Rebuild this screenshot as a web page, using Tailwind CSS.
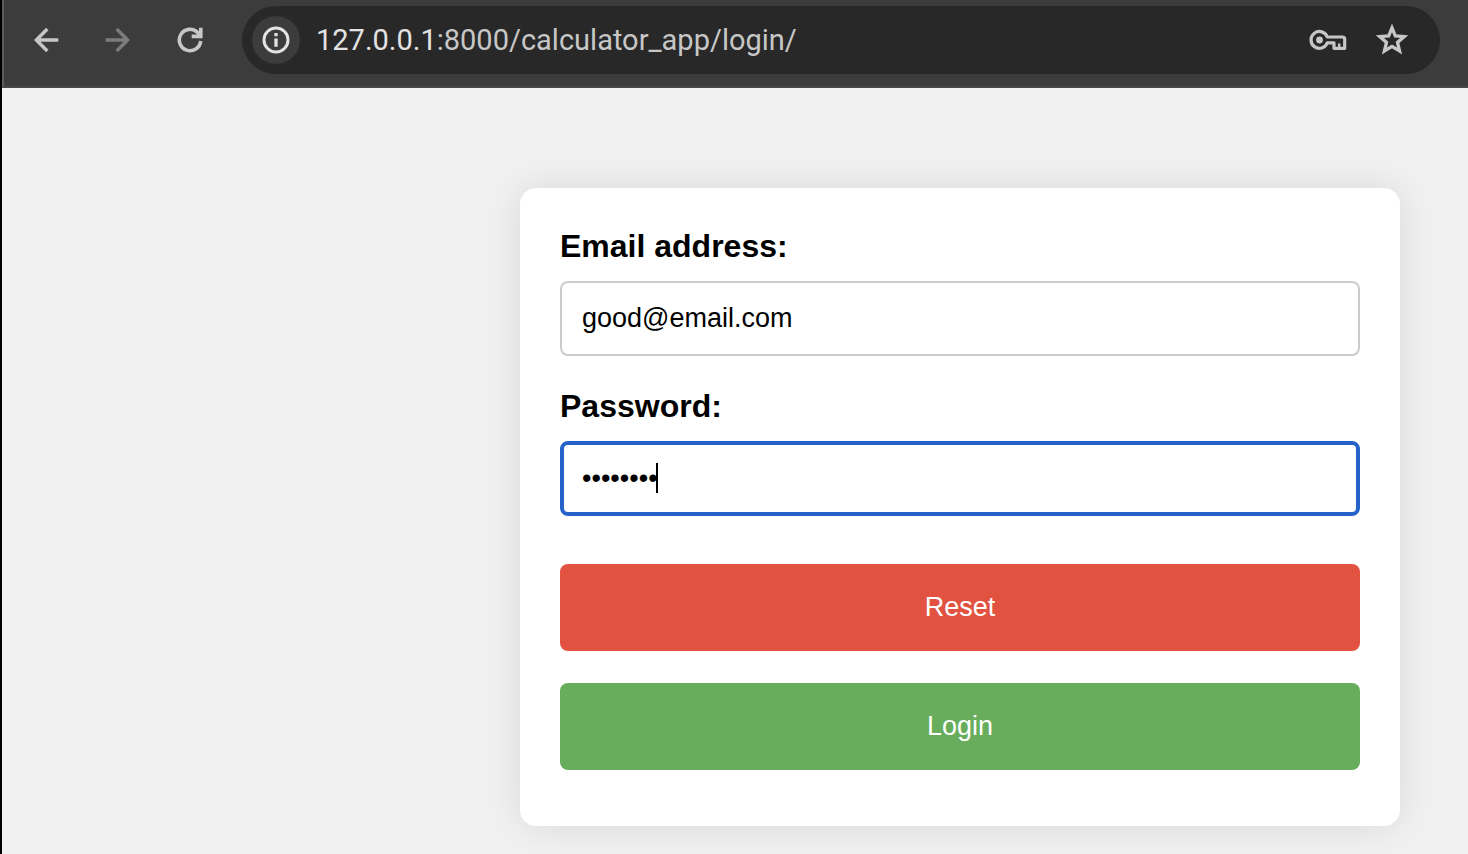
<!DOCTYPE html>
<html lang="en">
<head>
<meta charset="utf-8">
<title>Login</title>
<script src="https://cdn.jsdelivr.net/npm/@tailwindcss/browser@4"></script>
</head>
<body class="flex min-h-screen flex-col border-l-2 border-black bg-[#f1f1f1] font-['Liberation_Sans',Arial,sans-serif] text-black">
  <header class="flex h-[88px] items-center border-b-2 border-l-2 border-b-[#474747] border-l-[#5c5c5c] bg-[#3c3c3c] pr-7 pt-1.5 pb-3">
    <nav class="flex shrink-0 items-center gap-8 pl-[22px]" aria-label="Browser">
      <button type="button" aria-label="Back" class="size-10 text-[#c7c7c7]">
        <svg viewBox="0 0 40 40" fill="none" stroke="currentColor" stroke-width="3.4" class="size-10"><path d="M32.300 20H11M21.300 9 10.400 20l10.900 11"/></svg>
      </button>
      <button type="button" aria-label="Forward" class="size-10 text-[#7c7c7c]">
        <svg viewBox="0 0 40 40" fill="none" stroke="currentColor" stroke-width="3.4" class="size-10"><path d="M7.700 20H29M18.700 9l10.900 11-10.900 11"/></svg>
      </button>
      <button type="button" aria-label="Reload" class="size-10 text-[#c7c7c7]">
        <svg viewBox="0 0 40 40" fill="none" stroke="currentColor" stroke-width="3.6" class="size-10"><path d="M30.700 21A10.700 10.700 0 1 1 27.600 12.400L31 16"/><path d="M30.800 7.800v8.600H21.700"/></svg>
      </button>
    </nav>
    <div class="ml-8 flex h-[68px] min-w-0 flex-1 items-center rounded-full bg-[#282828] pr-7 pl-2.5">
      <button type="button" aria-label="View site information" class="flex size-12 shrink-0 items-center justify-center rounded-full bg-[#3c3c3c] text-[#e3e3e3]">
        <svg viewBox="0 0 28 28" class="size-7" fill="none" stroke="currentColor" stroke-width="3"><circle cx="14" cy="14" r="12"/><path d="M14 12.400v8.400M14 7v3.300" stroke-width="3.3"/></svg>
      </button>
      <p class="ml-4 min-w-0 flex-1 truncate font-[Roboto,sans-serif] text-[29px] leading-10 text-[#c7c7c7]"><span class="text-[#e3e3e3]">127.0.0.1</span>:8000/calculator_app/login/</p>
      <button type="button" aria-label="Manage passwords" class="shrink-0 text-[#c7c7c7]">
        <svg viewBox="0 0 40 40" class="size-10" fill="none" stroke="currentColor" stroke-width="3.200" stroke-linejoin="round"><path d="M19.300 17H34.500a2.200 2.200 0 0 1 2.200 2.200V28.300H26V22.800H19.300A8.400 8.400 0 1 1 19.300 17Z"/><circle cx="11.500" cy="20" r="3.400" fill="currentColor" stroke="none"/><path d="M31.200 23.500v4.500" stroke-width="2.4"/></svg>
      </button>
      <button type="button" aria-label="Bookmark this page" class="ml-6 shrink-0 text-[#c7c7c7]">
        <svg viewBox="0 0 40 40" class="size-10" fill="none" stroke="currentColor" stroke-width="3.300"><path d="M20 7.900 23.300 15.900 32.200 16.600 25.500 22.400 27.600 31 20 26.400 12.400 31 14.500 22.400 7.800 16.600 16.700 15.900Z"/></svg>
      </button>
    </div>
  </header>
  <main class="flex-1 px-[68px] pt-[100px] pb-7">
    <form class="ml-auto flex w-full max-w-[880px] flex-col rounded-2xl bg-white px-10 pt-10 pb-14 shadow-[0_0_40px_rgba(0,0,0,0.1)]" onsubmit="return false">
      <label for="email" class="mb-4 text-[32px] leading-[37px] font-bold">Email address:</label>
      <input id="email" type="email" value="good@email.com" class="mb-8 h-[75px] w-full rounded-lg border-2 border-[#ccc] bg-white px-5 text-[27px] outline-none">
      <label for="password" class="mb-4 text-[32px] leading-[37px] font-bold">Password:</label>
      <div class="relative mb-12">
        <input id="password" type="password" value="password" class="block h-[75px] w-full rounded-lg border-4 border-[#2563c9] bg-white px-[18px] text-[27px] caret-transparent outline-none">
        <span class="absolute top-[22px] left-24 h-[30px] w-0.5 bg-black" aria-hidden="true"></span>
      </div>
      <button type="reset" class="mb-8 h-[87px] rounded-lg bg-[#e15241] text-[27px] text-white">Reset</button>
      <button type="submit" class="h-[87px] rounded-lg bg-[#67ad5b] text-[27px] text-white">Login</button>
    </form>
  </main>
</body>
</html>
